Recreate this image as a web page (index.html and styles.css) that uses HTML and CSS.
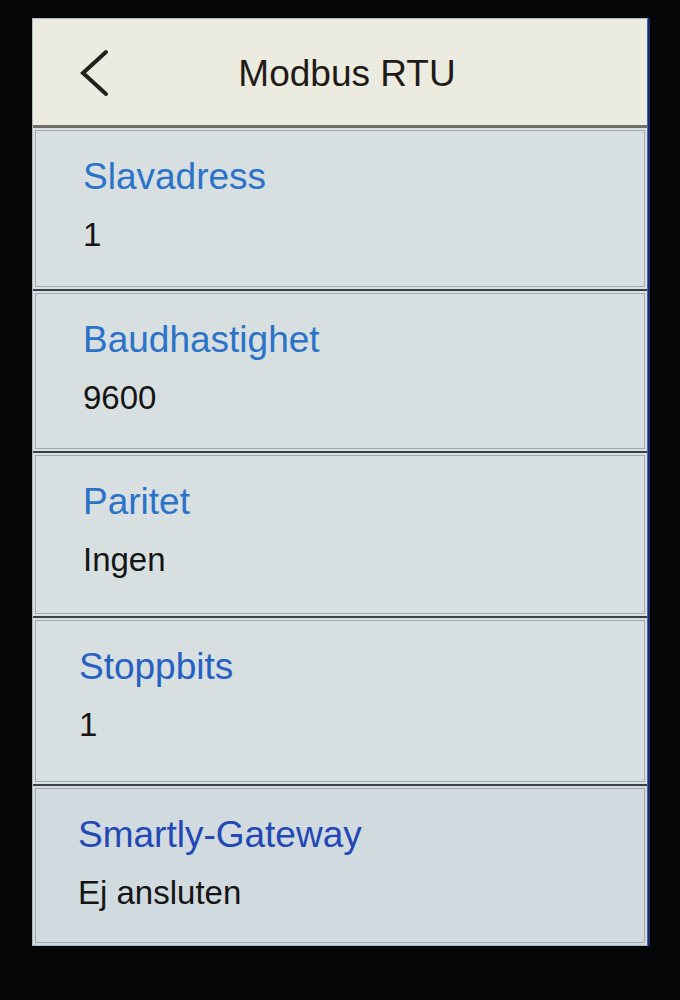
FILE: index.html
```html
<!DOCTYPE html>
<html lang="sv">
<head>
<meta charset="utf-8">
<title>Modbus RTU</title>
<link rel="stylesheet" href="styles.css">
</head>
<body>
<div class="screen">
  <header class="topbar">
    <svg class="back" width="34" height="50" viewBox="0 0 34 50" aria-hidden="true">
      <polyline points="29,4 6,25 29,46" fill="none" stroke="#231f1c" stroke-width="4" stroke-linecap="round" stroke-linejoin="miter"/>
    </svg>
    <h1 class="title">Modbus RTU</h1>
  </header>
  <div class="list">
    <div class="row"><div class="label">Slavadress</div><div class="value">1</div></div>
    <div class="row"><div class="label">Baudhastighet</div><div class="value">9600</div></div>
    <div class="row"><div class="label">Paritet</div><div class="value">Ingen</div></div>
    <div class="row"><div class="label">Stoppbits</div><div class="value">1</div></div>
    <div class="row"><div class="label">Smartly-Gateway</div><div class="value">Ej ansluten</div></div>
  </div>
</div>
</body>
</html>
```

FILE: styles.css
```css
html, body {
  margin: 0;
  padding: 0;
  background: #050607;
  height: 1000px;
  overflow: hidden;
}

.screen {
  margin: 18px 0 0 32px;
  width: 614px;
  height: 926px;
  border: 1px solid #aeb6c0;
  border-right-color: #4a63a8;
  display: flex;
  flex-direction: column;
  font-family: "Liberation Sans", Arial, sans-serif;
  box-shadow: 2px 0 0 #1a2c6a;
}

.topbar {
  height: 106px;
  background: #ecebe0;
  border-bottom: 3px solid #6f6f6c;
  display: grid;
  grid-template-columns: 1fr auto 1fr;
  align-items: center;
}

.back {
  grid-column: 1;
  margin-left: 44px;
  margin-top: 2px;
}

.title {
  grid-column: 2;
  margin: 0;
  font-weight: normal;
  font-size: 37px;
  line-height: 1;
  color: #1f1b18;
  margin-left: 14px;
  margin-top: 2px;
}

.list {
  flex: 1;
  display: flex;
  flex-direction: column;
  background: #d6dfe0;
}

.row {
  box-sizing: border-box;
  height: 163px;
  padding: 30px 0 0 50px;
  box-shadow: inset 0 0 0 2px #d7dfe1, inset 0 0 0 3px #a3aaaf;
  border-bottom: 2px solid #3b3e46;
  background: #d7dfe1;
}

.row:nth-child(2) { height: 162px; }
.row:nth-child(3) { height: 165px; }
.row:nth-child(4) { height: 168px; padding-left: 46px; }

.row:last-child {
  flex: 1;
  height: auto;
  border-bottom: none;
  background: #d1dadf;
  padding-left: 45px;
  box-shadow: inset 0 0 0 2px #d1dadf, inset 0 0 0 3px #a3aaaf;
}

.label {
  font-size: 37px;
  line-height: 1;
  color: #2b72c9;
}

.row:nth-child(4) .label { color: #2660c2; }
.row:nth-child(5) .label { color: #2248b6; }

.value {
  margin-top: 23px;
  font-size: 33px;
  line-height: 1;
  color: #151515;
}
```
